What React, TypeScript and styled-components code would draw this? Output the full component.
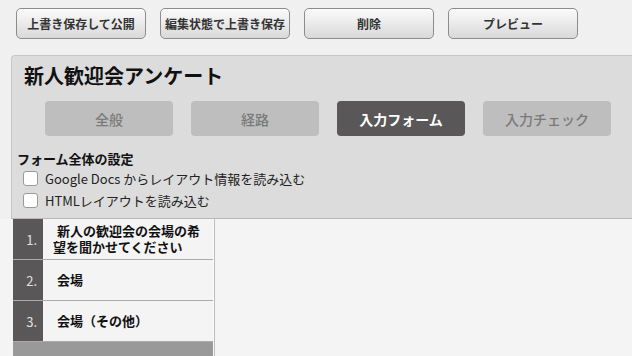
import styled, { createGlobalStyle } from "styled-components";

const GlobalStyle = createGlobalStyle`
  html, body {
    margin: 0;
    height: 100%;
    overflow: hidden;
    background: #f0f0f0;
    font-family: "Noto Sans CJK JP", "Noto Sans", sans-serif;
    color: #222;
  }
  #root {
    height: 100%;
  }
`;

const toolButtons = ["上書き保存して公開", "編集状態で上書き保存", "削除", "プレビュー"];
const tabs = ["全般", "経路", "入力フォーム", "入力チェック"];
const questions = ["新人の歓迎会の会場の希望を聞かせてください", "会場", "会場（その他）"];

export default function App() {
  return (
    <>
      <GlobalStyle />
      <Page>
        <Toolbar>
          {toolButtons.map((label) => (
            <ToolButton key={label}>{label}</ToolButton>
          ))}
        </Toolbar>
        <Panel>
          <Title>新人歓迎会アンケート</Title>
          <Tabs>
            {tabs.map((t) => (
              <Tab key={t} $active={t === "入力フォーム"}>
                {t}
              </Tab>
            ))}
          </Tabs>
          <SectionHeading>フォーム全体の設定</SectionHeading>
          <CheckRow>
            <Box />
            Google Docs からレイアウト情報を読み込む
          </CheckRow>
          <CheckRow>
            <Box />
            HTMLレイアウトを読み込む
          </CheckRow>
        </Panel>
        <Editor>
          <QuestionList>
            {questions.map((q, i) => (
              <Question key={q}>
                <Num>{i + 1}.</Num>
                <QText>{q}</QText>
              </Question>
            ))}
            <Filler />
          </QuestionList>
          <Canvas />
        </Editor>
      </Page>
    </>
  );
}

const Page = styled.div`
  display: flex;
  flex-direction: column;
  height: 100%;
`;

const Toolbar = styled.div`
  display: flex;
  gap: 14px;
  padding: 8px 16px 0;
`;

const ToolButton = styled.button`
  width: 130px;
  height: 31px;
  border: 1px solid #8c8c8c;
  border-radius: 5px;
  background: linear-gradient(#fbfbfb, #d9d9d9);
  font-family: inherit;
  font-size: 12px;
  font-weight: bold;
  color: #333;
  padding: 0;
`;

const Panel = styled.div`
  margin: 16px -10px 0 11px;
  padding: 7px 0 7px 12px;
  background: #dcdcdc;
  border: 1px solid #c6c6c6;
  border-bottom-color: #b8b8b8;
  border-radius: 4px 0 0 0;
`;

const Title = styled.h1`
  margin: 0;
  font-size: 20px;
  line-height: 25px;
  font-weight: bold;
  color: #111;
`;

const Tabs = styled.div`
  display: flex;
  gap: 18px;
  margin: 13px 0 0 21px;
`;

const Tab = styled.div<{ $active?: boolean }>`
  width: 128px;
  height: 35px;
  border-radius: 4px;
  display: flex;
  align-items: center;
  justify-content: center;
  font-size: 14px;
  font-weight: ${(p) => (p.$active ? "bold" : "500")};
  background: ${(p) => (p.$active ? "#595757" : "#bebebe")};
  color: ${(p) => (p.$active ? "#fff" : "#7a7a7a")};
`;

const SectionHeading = styled.div`
  margin: 14px 0 0 -7px;
  font-size: 13px;
  line-height: 17px;
  font-weight: bold;
  color: #111;
`;

const CheckRow = styled.label`
  display: flex;
  align-items: center;
  gap: 7px;
  height: 22px;
  margin-left: -1px;
  font-size: 13px;
  color: #222;
`;

const Box = styled.span`
  width: 15px;
  height: 15px;
  box-sizing: border-box;
  background: #fff;
  border: 1px solid #9a9a9a;
  border-radius: 3px;
  flex: none;
`;

const Editor = styled.div`
  flex: 1;
  display: flex;
  min-height: 0;
  background: #f4f4f4;
`;

const QuestionList = styled.div`
  width: 200px;
  margin-left: 13px;
  display: flex;
  flex-direction: column;
  border-right: 1px solid #fafafa;
`;

const Question = styled.div`
  display: flex;
  height: 41px;
  box-sizing: border-box;
  border-bottom: 1px solid #ababab;
`;

const Num = styled.div`
  width: 30px;
  background: #595757;
  color: #e2e2e2;
  font-size: 13px;
  display: flex;
  align-items: center;
  justify-content: flex-end;
  padding-right: 6px;
  box-sizing: border-box;
`;

const QText = styled.div`
  flex: 1;
  display: flex;
  align-items: center;
  padding: 0 10px;
  font-size: 13px;
  line-height: 16px;
  font-weight: bold;
  color: #111;
  text-indent: 4px;
`;

const Filler = styled.div`
  flex: 1;
  background: #999;
`;

const Canvas = styled.div`
  flex: 1;
  border-left: 1px solid #bbb;
  background: #f4f4f4;
`;
